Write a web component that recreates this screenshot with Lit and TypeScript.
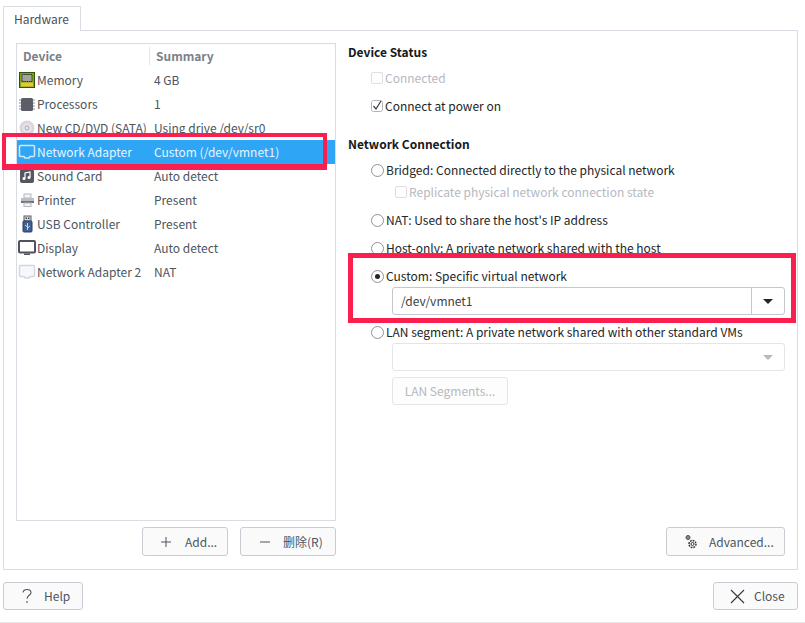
import { LitElement, html, css, svg } from "lit";
import { customElement } from "lit/decorators.js";

const icons: Record<string, unknown> = {
  memory: svg`<rect x="1.500" y="1.500" width="15" height="15" fill="#7aa51c" stroke="#35520c"/><rect x="3" y="11.500" width="12" height="4" fill="#e5c92e"/><rect x="4" y="3.500" width="10" height="7" fill="#a3a39c" stroke="#33362f" stroke-dasharray="1.500 .6"/>`,
  cpu: svg`<path d="M1 5h2M1 8h2M1 11h2M1 14h2M15 5h2M15 8h2M15 11h2M15 14h2" stroke="#8d9097"/><rect x="3" y="3" width="12" height="13" rx="1.500" fill="#5b5e68"/>`,
  cd: svg`<circle cx="9" cy="9" r="7.500" fill="#d9d5dc"/><circle cx="9" cy="9" r="5" fill="#e9dfe8"/><circle cx="9" cy="9" r="2.400" fill="#b9b6bd"/><circle cx="9" cy="9" r="1" fill="#fff"/>`,
  net: svg`<path d="M2.500 2.500h13a1 1 0 0 1 1 1v9a1 1 0 0 1-1 1H12l-1 1.500H7L6 13.500H2.500a1 1 0 0 1-1-1v-9a1 1 0 0 1 1-1z" fill="none" stroke="#d5e6f5" stroke-width="1.500"/>`,
  net2: svg`<path d="M2.500 2.500h13a1 1 0 0 1 1 1v9a1 1 0 0 1-1 1H12l-1 1.500H7L6 13.500H2.500a1 1 0 0 1-1-1v-9a1 1 0 0 1 1-1z" fill="#f7f8fb" stroke="#d3d6e0" stroke-width="1.500"/>`,
  sound: svg`<rect x="2" y="2" width="14" height="14" rx="2" fill="#54575f"/><path d="M7 11V6l5-1v5" fill="none" stroke="#fff" stroke-width="1.200"/><circle cx="6" cy="11.500" r="1.500" fill="#fff"/><circle cx="11" cy="10.500" r="1.500" fill="#fff"/>`,
  printer: svg`<rect x="6" y="3" width="7" height="4" fill="#f4f4f6" stroke="#b4b6bd"/><rect x="3" y="7" width="13" height="3" fill="#bcbec5"/><rect x="3" y="10" width="13" height="2" fill="#70737c"/><rect x="6" y="12" width="7" height="3.500" fill="#f4f4f6" stroke="#b4b6bd"/>`,
  usb: svg`<rect x="6" y="1" width="7" height="5" fill="#d8dae0" stroke="#5a5d66"/><rect x="7.500" y="2.500" width="1.500" height="1.500" fill="#444"/><rect x="10" y="2.500" width="1.500" height="1.500" fill="#444"/><rect x="5" y="6" width="9" height="11" rx="1" fill="#3f6191" stroke="#2d3f5e"/><path d="M9.500 8v7M9.500 12l-2.500-2M9.500 13l2.500-2" stroke="#c9d6e8" fill="none"/>`,
  display: svg`<rect x="1" y="2" width="16" height="11.500" rx="1" fill="#fff" stroke="#50535c" stroke-width="2"/><path d="M6 14.500h6v1.500H6z" fill="#50535c"/>`,
};

const rows = [
  ["memory", "Memory", "4 GB"],
  ["cpu", "Processors", "1"],
  ["cd", "New CD/DVD (SATA)", "Using drive /dev/sr0"],
  ["net", "Network Adapter", "Custom (/dev/vmnet1)"],
  ["sound", "Sound Card", "Auto detect"],
  ["printer", "Printer", "Present"],
  ["usb", "USB Controller", "Present"],
  ["display", "Display", "Auto detect"],
  ["net2", "Network Adapter 2", "NAT"],
];

@customElement("app-root")
export class AppRoot extends LitElement {
  static styles = css`
    :host { display: block; width: 805px; height: 623px; background: #fff; overflow: hidden; position: relative;
      font: 12px/18px "Noto Sans CJK SC", "Noto Sans CJK JP", sans-serif; color: #232629; box-sizing: border-box; }
    * { box-sizing: border-box; }
    .page { display: flex; flex-direction: column; height: 623px; padding: 6px 7px 0 3px; border-bottom: 1px solid #e6e7ec; }
    .tab { width: 78px; height: 25px; border: 1px solid #dadce4; border-bottom: 0; background: #fff; padding: 3px 0 0 10px;
      color: #4a4f58; margin-bottom: -1px; position: relative; z-index: 1; }
    .pane { height: 540px; border: 1px solid #dadce4; display: grid; grid-template-columns: 320px 1fr; column-gap: 12px; padding: 12px; }
    .left { display: flex; flex-direction: column; }
    .list { height: 478px; border: 1px solid #dadce4; color: #4c5560; }
    .head, .row { display: grid; height: 24px; align-items: center; }
    .head { grid-template-columns: 126px 1fr; font-weight: 700; color: #7b8089; padding-left: 6px; }
    .head span + span { border-left: 1px solid #e4e5ea; padding-left: 6px; }
    .row { grid-template-columns: 133px 1fr; padding-left: 1px; width: 318px; }
    .row.sel { background: #2fa5f5; color: #e8f4fd; }
    .name { display: flex; align-items: center; gap: 1px; white-space: nowrap; }
    .name svg { width: 18px; height: 18px; flex: none; }
    .val { padding-left: 3px; white-space: nowrap; }
    .btns { display: flex; justify-content: flex-end; gap: 12px; margin-top: 6px; }
    .btn { height: 29px; border: 1px solid #c9ccd3; border-radius: 3px; background: #fafafa; display: flex; align-items: center; color: #4c5560; white-space: nowrap; }
    .btn svg { flex: none; }
    .add { width: 86px; padding-left: 17px; gap: 13px; }
    .del { width: 96px; padding-left: 18px; gap: 12px; }
    .right { display: flex; flex-direction: column; min-width: 0; }
    h3 { margin: 0; font-size: 12px; font-weight: 700; line-height: 18px; color: #16191d; }
    .opt { display: flex; align-items: center; height: 18px; }
    .ind { margin-left: 23px; gap: 2px; }
    .ind2 { margin-left: 47px; gap: 2px; }
    .dis { color: #b6b9bf; }
    .cb { width: 12px; height: 12px; border: 1px solid #b0b3ba; border-radius: 2px; background: #fff; flex: none; display: block; }
    .cb.off { border-color: #dcdee3; }
    svg.cb { border: 0; }
    .radio { width: 13px; height: 13px; border: 1px solid #8f9297; border-radius: 50%; flex: none; background: #fff; display: flex; align-items: center; justify-content: center; }
    .radio i { width: 5px; height: 5px; border-radius: 50%; background: #232629; }
    .combo { margin-left: 44px; width: 393px; height: 28px; border: 1px solid #c4c7cd; border-radius: 3px; display: flex; align-items: center; }
    .combo .txt { flex: 1; padding-left: 8px; color: #3a3f46; }
    .combo .arr { width: 33px; height: 100%; border-left: 1px solid #c4c7cd; display: flex; align-items: center; justify-content: center; }
    .combo.off { border-color: #e4e5ea; }
    .combo.off .arr { border-left: 0; }
    .seg { margin: 6px 0 0 44px; width: 116px; height: 28px; border: 1px solid #e4e5ea; border-radius: 3px; display: flex; align-items: center; justify-content: center; color: #b6b9bf; background: #fdfdfd; }
    .grow { flex: 1; }
    .adv { align-self: flex-end; width: 119px; padding-left: 17px; gap: 11px; margin-bottom: 1px; }
    .foot { display: flex; justify-content: space-between; margin-top: 12px; }
    .help { width: 80px; height: 28px; padding-left: 17px; gap: 11px; }
    .close { width: 85px; height: 28px; padding-left: 16px; gap: 9px; }
    .mark { position: absolute; border: 5px solid #fb1f4f; pointer-events: none; }
    .m1 { left: 2px; top: 133px; width: 325px; height: 37px; border-width: 4px 4px 6px; }
    .m2 { left: 348px; top: 253px; width: 448px; height: 70px; }
    .mt8 { margin-top: 8px; }
    .mt10 { margin-top: 10px; }
    .mt4 { margin-top: 4px; }
    .mt2 { margin-top: 2px; }
    .mt20 { margin-top: 20px; }
  `;

  render() {
    return html`
      <div class="page">
        <div class="tab">Hardware</div>
        <div class="pane">
          <div class="left">
            <div class="list">
              <div class="head"><span>Device</span><span>Summary</span></div>
              ${rows.map(([ic, n, v]) => html`
                <div class="row ${ic === "net" ? "sel" : ""}">
                  <div class="name"><svg viewBox="0 0 18 18">${icons[ic]}</svg><span>${n}</span></div>
                  <div class="val">${v}</div>
                </div>`)}
            </div>
            <div class="btns">
              <div class="btn add"><svg width="12" height="12" viewBox="0 0 12 12"><path d="M6 1v10M1 6h10" stroke="#4c5560"/></svg>Add...</div>
              <div class="btn del"><svg width="12" height="12" viewBox="0 0 12 12"><path d="M1 6h10" stroke="#4c5560"/></svg>删除(R)</div>
            </div>
          </div>
          <div class="right">
            <h3>Device Status</h3>
            <div class="opt ind dis mt8"><span class="cb off"></span>Connected</div>
            <div class="opt ind mt10">
              <svg class="cb" width="12" height="12" viewBox="0 0 12 12"><rect x=".5" y=".5" width="11" height="11" rx="2" fill="#fff" stroke="#b0b3ba"/><path d="M2.500 6l2.500 3 5-8" fill="none" stroke="#3a3d42" stroke-width="1.200"/></svg>Connect at power on</div>
            <h3 class="mt20">Network Connection</h3>
            <div class="opt ind mt8"><span class="radio"></span>Bridged: Connected directly to the physical network</div>
            <div class="opt ind2 dis mt4"><span class="cb off"></span>Replicate physical network connection state</div>
            <div class="opt ind mt10"><span class="radio"></span>NAT: Used to share the host's IP address</div>
            <div class="opt ind mt10"><span class="radio"></span>Host-only: A private network shared with the host</div>
            <div class="opt ind mt10"><span class="radio"><i></i></span>Custom: Specific virtual network</div>
            <div class="combo mt2"><span class="txt">/dev/vmnet1</span><span class="arr"><svg width="10" height="5" viewBox="0 0 10 5"><path d="M0 0h10L5 5z" fill="#232629"/></svg></span></div>
            <div class="opt ind mt8"><span class="radio"></span>LAN segment: A private network shared with other standard VMs</div>
            <div class="combo off mt2"><span class="txt"></span><span class="arr"><svg width="10" height="5" viewBox="0 0 10 5"><path d="M0 0h10L5 5z" fill="#b6b9bf"/></svg></span></div>
            <div class="seg">LAN Segments...</div>
            <div class="grow"></div>
            <div class="btn adv"><svg width="14" height="16" viewBox="0 0 14 16"><circle cx="4" cy="3.500" r="2" fill="#8a8c90" stroke="#4c4f55"/><circle cx="8.500" cy="10" r="3.500" fill="none" stroke="#33363b" stroke-width="1.500" stroke-dasharray="1.800 .9"/><circle cx="8.500" cy="10" r="1.500" fill="none" stroke="#33363b"/></svg>Advanced...</div>
          </div>
        </div>
        <div class="foot">
          <div class="btn help"><svg width="12" height="16" viewBox="0 0 12 16"><path d="M2 4.500C2.300 2.500 4 1.500 6 1.500s4 1.200 4 3.200c0 2.500-4 2.800-4 6M6 13v2" fill="none" stroke="#4c5560" stroke-width="1.100"/></svg>Help</div>
          <div class="btn close"><svg width="15" height="15" viewBox="0 0 15 15"><path d="M1 1l13 13M14 1L1 14" stroke="#33363b" stroke-width="1.100"/></svg>Close</div>
        </div>
      </div>
      <div class="mark m1"></div>
      <div class="mark m2"></div>
    `;
  }
}
